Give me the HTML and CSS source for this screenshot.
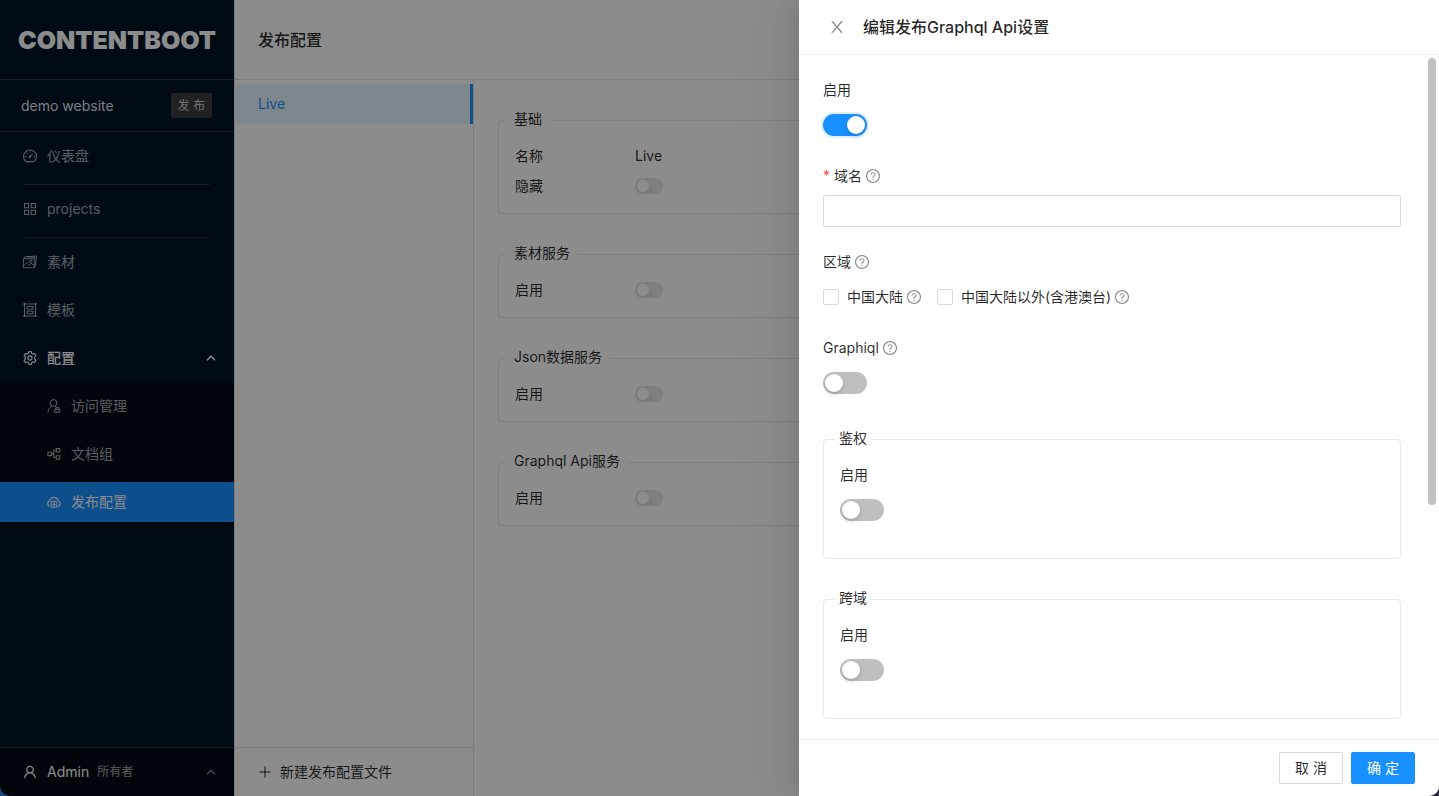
FILE: index.html
```html
<!DOCTYPE html>
<html lang="zh-CN">
<head>
<meta charset="utf-8">
<meta name="viewport" content="width=device-width, initial-scale=1">
<title>发布配置 - CONTENTBOOT</title>
<link rel="stylesheet" href="styles.css">
</head>
<body>
<svg class="sprite" aria-hidden="true">
  <symbol id="i-help" viewBox="64 64 896 896"><path fill="currentColor" d="M512 64C264.6 64 64 264.6 64 512s200.6 448 448 448 448-200.6 448-448S759.4 64 512 64zm0 820c-205.4 0-372-166.6-372-372s166.6-372 372-372 372 166.6 372 372-166.6 372-372 372z"/><path fill="currentColor" d="M623.6 316.7C593.6 290.4 554 276 512 276s-81.6 14.5-111.6 40.7C369.2 344 352 380.7 352 420v7.6c0 4.4 3.6 8 8 8h48c4.4 0 8-3.6 8-8V420c0-44.1 43.1-80 96-80s96 35.9 96 80c0 31.1-22 59.6-56.1 72.7-21.2 8.1-39.2 22.3-52.1 40.9-13.1 19-19.9 41.8-19.9 64.9V620c0 4.4 3.6 8 8 8h48c4.4 0 8-3.6 8-8v-22.7a48.3 48.3 0 0130.9-44.8c59-22.7 97.1-74.7 97.1-132.5.1-39.3-17.1-76-48.3-103.3zM472 732a40 40 0 1080 0 40 40 0 10-80 0z"/></symbol>
  <symbol id="i-up" viewBox="0 0 10 10"><path fill="none" stroke="currentColor" stroke-width="1.5" d="M1 7.2 5 3.2 9 7.2"/></symbol>
</svg>
<div class="app">
  <aside class="sider">
    <div class="brand">CONTENTBOOT</div>
    <div class="site">
      <span>demo website</span>
      <button class="publish" type="button">发 布</button>
    </div>
    <nav class="menu">
      <a class="item" href="#">
        <svg class="icon" viewBox="0 0 14 14" fill="none" stroke="currentColor" stroke-width="1.1"><path d="M3 12.6A6.5 6.5 0 1 1 11 12.6Z" stroke-linejoin="round"/><path d="M6.8 8 9.6 4.9M7 2.2v1.4M3.4 3.9l.9.9M1.9 7.6h1.4M10.7 7.6h1.4"/><circle cx="6.8" cy="8" r=".6"/></svg>
        仪表盘</a>
      <hr class="divider">
      <a class="item" href="#">
        <svg class="icon" viewBox="0 0 14 14" fill="none" stroke="currentColor" stroke-width="1.1"><path d="M1.5 1.5h4.2v4.2H1.5zM8.3 1.5h4.2v4.2H8.3zM1.5 8.3h4.2v4.2H1.5zM8.3 8.3h4.2v4.2H8.3z"/></svg>
        projects</a>
      <hr class="divider">
      <a class="item" href="#">
        <svg class="icon" viewBox="0 0 14 14" fill="none" stroke="currentColor" stroke-width=".9"><path d="M.5 3.8h10.9v9H.5zM1.2 3.6 1.5 2.2 3.6 1.8 13.5 1 12.5 10.6 11.5 12M3.5 1.8l8 .6v1.4M.8 10.4 3.4 7.8l2.8 2.6 2-2 3 2.2"/><circle cx="7.6" cy="6.5" r="1.3"/></svg>
        素材</a>
      <a class="item" href="#">
        <svg class="icon" viewBox="0 0 14 14" fill="none" stroke="currentColor"><path d="M1.5 0v14M12.5 0v14M0 1h14M0 13h14M4 3.5h6v2.6H4zM4 8.1h6v2.6H4z"/></svg>
        模板</a>
      <a class="item open" href="#">
        <svg class="icon" viewBox="0 0 14 14" fill="none" stroke="currentColor" stroke-width="1.1" stroke-linejoin="round"><path d="M5.8.6H8.2L8.6 2.2 9.8 2.9 11.4 2.4 12.9 4.6 11.7 5.9V8.1L12.9 9.4 11.4 11.6 9.8 11.1 8.6 11.8 8.2 13.4H5.8L5.4 11.8 4.2 11.1 2.6 11.6 1.1 9.4 2.3 8.1V5.9L1.1 4.6 2.6 2.4 4.2 2.9 5.4 2.2Z"/><circle cx="7" cy="7" r="2.1"/></svg>
        配置<svg class="caret"><use href="#i-up"/></svg></a>
      <div class="submenu">
        <a class="item" href="#">
          <svg class="icon" viewBox="0 0 14 14" fill="none" stroke="currentColor"><circle cx="6.6" cy="4" r="3.4"/><path d="M1 13.4C1.1 10.4 2.6 8.2 4.9 7.2M8.3 7.2l.9.6M7.7 10.2h5.1v3.2H7.7zM8.9 10V8.4h2.8V10M10.2 11.2v1.2"/></svg>
          访问管理</a>
        <a class="item" href="#">
          <svg class="icon" viewBox="0 0 14 14" fill="none" stroke="currentColor" stroke-width="1.1"><path d="M.9 5.2h3.4v3.4H.9zM9.3 1.6h3.4V5H9.3zM9.3 8.8h3.4v3.4H9.3zM4.4 6.9h2.2M9.2 3.3H6.8v7.2h2.4"/></svg>
          文档组</a>
        <a class="item selected" href="#" aria-current="page">
          <svg class="icon" viewBox="0 0 14 14" fill="none" stroke="currentColor" stroke-width="1.1"><path d="M3.2 11.4A3 3 0 0 1 2.5 5.7 4.8 4.8 0 0 1 11.5 5.7 3 3 0 0 1 10.8 11.4"/><path stroke-width=".9" d="M4.2 6.3h5.6v6H4.2zM4.2 9.3h5.6M7 6.3v6"/></svg>
          发布配置</a>
      </div>
    </nav>
    <button class="account" type="button">
      <svg class="icon" viewBox="64 64 896 896" fill="currentColor"><path d="M858.5 763.6a374 374 0 00-80.6-119.5 375.63 375.63 0 00-119.5-80.6c-.4-.2-.8-.3-1.2-.5C719.5 518 760 444.7 760 362c0-137-111-248-248-248S264 225 264 362c0 82.7 40.5 156 102.8 201.1-.4.2-.8.3-1.2.5-44.8 18.9-85 46-119.5 80.6a375.63 375.63 0 00-80.6 119.5A371.7 371.7 0 00136 901.8a8 8 0 008 8.2h60c4.4 0 7.9-3.5 8-7.8 2-77.2 33-149.5 87.8-204.3 56.7-56.7 132-87.9 212.2-87.9s155.5 31.2 212.2 87.9C779 752.7 810 825 812 902.2c.1 4.4 3.6 7.8 8 7.8h60a8 8 0 008-8.2c-1-47.8-10.9-94.3-29.5-138.2zM512 534c-45.9 0-89.1-17.9-121.6-50.4S340 407.9 340 362c0-45.9 17.9-89.1 50.4-121.6S466.1 190 512 190s89.1 17.9 121.6 50.4S684 316.1 684 362c0 45.9-17.9 89.1-50.4 121.6S557.9 534 512 534z"/></svg>
      <span>Admin</span><small class="role">所有者</small>
      <svg class="caret"><use href="#i-up"/></svg>
    </button>
  </aside>

  <main class="main">
    <header class="header"><h1 class="title">发布配置</h1></header>
    <div class="columns">
      <section class="profiles">
        <a class="profile" href="#">Live</a>
        <button class="add" type="button">
          <svg class="plus" viewBox="0 0 14 14" fill="none" stroke="currentColor"><path d="M7 1.5v11M1.5 7h11"/></svg>
          新建发布配置文件</button>
      </section>
      <section class="details">
        <fieldset class="group">
          <legend>基础</legend>
          <div class="row"><span class="key">名称</span><span>Live</span></div>
          <div class="row"><label class="key" for="hidden">隐藏</label><input class="switch small" id="hidden" type="checkbox" role="switch" disabled></div>
        </fieldset>
        <fieldset class="group">
          <legend>素材服务</legend>
          <div class="row"><label class="key" for="asset">启用</label><input class="switch small" id="asset" type="checkbox" role="switch" disabled></div>
        </fieldset>
        <fieldset class="group">
          <legend>Json数据服务</legend>
          <div class="row"><label class="key" for="json">启用</label><input class="switch small" id="json" type="checkbox" role="switch" disabled></div>
        </fieldset>
        <fieldset class="group">
          <legend>Graphql Api服务</legend>
          <div class="row"><label class="key" for="graphql">启用</label><input class="switch small" id="graphql" type="checkbox" role="switch" disabled></div>
        </fieldset>
      </section>
    </div>
  </main>

  <div class="mask"></div>
  <section class="drawer" role="dialog" aria-labelledby="drawer-title">
    <header class="drawer-header">
      <button class="close" type="button" aria-label="关闭">
        <svg class="close-icon" viewBox="64 64 896 896" fill="currentColor"><path d="M563.8 512l262.5-312.9c4.4-5.2.7-13.1-6.1-13.1h-79.8c-4.7 0-9.2 2.1-12.3 5.7L511.6 449.8 295.1 191.7c-3-3.6-7.5-5.7-12.3-5.7H203c-6.8 0-10.5 7.9-6.1 13.1L459.4 512 196.9 824.9A7.95 7.95 0 00203 838h79.8c4.7 0 9.2-2.1 12.3-5.7l216.5-258.1 216.5 258.1c3 3.6 7.5 5.7 12.3 5.7h79.8c6.8 0 10.5-7.9 6.1-13.1L563.8 512z"/></svg>
      </button>
      <h2 class="title" id="drawer-title">编辑发布Graphql Api设置</h2>
    </header>
    <div class="drawer-body">
      <form class="form" id="api-form">
        <div class="field">
          <label for="enabled">启用</label>
          <div class="control"><input class="switch focused" id="enabled" type="checkbox" role="switch" checked></div>
        </div>
        <div class="field">
          <label for="domain"><span class="required">*</span>域名<svg class="help"><use href="#i-help"/></svg></label>
          <div class="control"><input class="text" id="domain" type="text"></div>
        </div>
        <div class="field" role="group" aria-labelledby="region">
          <span class="caption" id="region">区域<svg class="help"><use href="#i-help"/></svg></span>
          <div class="control">
            <label class="choice"><input class="check" type="checkbox">中国大陆<svg class="help"><use href="#i-help"/></svg></label>
            <label class="choice"><input class="check" type="checkbox">中国大陆以外(含港澳台)<svg class="help"><use href="#i-help"/></svg></label>
          </div>
        </div>
        <div class="field">
          <label for="graphiql">Graphiql<svg class="help"><use href="#i-help"/></svg></label>
          <div class="control"><input class="switch" id="graphiql" type="checkbox" role="switch"></div>
        </div>
        <fieldset class="group">
          <legend>鉴权</legend>
          <div class="field">
            <label for="auth">启用</label>
            <div class="control"><input class="switch" id="auth" type="checkbox" role="switch"></div>
          </div>
        </fieldset>
        <fieldset class="group">
          <legend>跨域</legend>
          <div class="field">
            <label for="cors">启用</label>
            <div class="control"><input class="switch" id="cors" type="checkbox" role="switch"></div>
          </div>
        </fieldset>
      </form>
      <div class="rail"><div class="thumb"></div></div>
    </div>
    <footer class="drawer-footer">
      <button class="btn" type="button">取 消</button>
      <button class="btn primary" type="submit" form="api-form">确 定</button>
    </footer>
  </section>
</div>
</body>
</html>
```

FILE: styles.css
```css
* { box-sizing: border-box; }

body {
  margin: 0;
  font: 14px/22px Inter, "Noto Sans CJK SC", sans-serif;
  color: rgba(0, 0, 0, .85);
  background: linear-gradient(90deg, #174a80 50%, #2d2840 50%);
}

button, input { font: inherit; color: inherit; margin: 0; }
button { border: 0; background: none; padding: 0; }
a { color: inherit; text-decoration: none; }
h1, h2 { margin: 0; }
svg { display: block; flex: none; }
.sprite { position: absolute; width: 0; height: 0; }

.app {
  position: relative;
  display: flex;
  height: 100vh;
  overflow: hidden;
  border-radius: 0 0 10px 10px;
  background: #fff;
}

/* Sidebar */
.sider {
  flex: none;
  width: 234px;
  display: flex;
  flex-direction: column;
  background: #001529;
  color: #fff;
}
.brand {
  height: 80px;
  padding: 0 18px;
  display: flex;
  align-items: center;
  border-bottom: 1px solid #303030;
  font-size: 25px;
  font-weight: 900;
}
.site {
  height: 52px;
  padding: 0 22px 0 21px;
  display: flex;
  align-items: center;
  justify-content: space-between;
  border-bottom: 1px solid #303030;
  color: rgba(255, 255, 255, .9);
}
.publish {
  height: 25px;
  padding: 0 7px;
  border-radius: 2px;
  background: #3c3c40;
  font-size: 12px;
  color: rgba(255, 255, 255, .75);
}
.menu { flex: 1; }
.item {
  display: flex;
  align-items: center;
  gap: 10px;
  height: 40px;
  margin: 4px 0;
  padding: 0 18px 0 23px;
  color: rgba(255, 255, 255, .65);
}
.menu, .submenu { display: flex; flex-direction: column; }
.icon { width: 14px; height: 14px; }
.item.open { color: #fff; font-weight: 500; }
.caret { width: 10px; height: 10px; margin-left: auto; }
.divider {
  width: auto;
  height: 1px;
  margin: 4px 24px 0;
  border: 0;
  background: #303030;
  align-self: stretch;
}
.submenu { background: #000c17; }
.submenu .item { padding-left: 47px; }
.item.selected { background: #1890ff; color: #fff; }
.account {
  display: flex;
  align-items: center;
  gap: 10px;
  height: 49px;
  padding: 0 18px 0 23px;
  border-top: 1px solid #303030;
  background: #000c17;
}
.account .caret { opacity: .5; }
.role {
  margin-left: -2px;
  font-size: 12px;
  color: rgba(255, 255, 255, .65);
}

/* Main area */
.main {
  flex: 1;
  min-width: 0;
  display: flex;
  flex-direction: column;
  border-left: 1px solid #e0e0e0;
}
.header {
  height: 80px;
  padding: 0 23px;
  display: flex;
  align-items: center;
  border-bottom: 1px solid #e4e4e4;
}
.title { font-size: 16px; font-weight: 500; }
.columns { flex: 1; display: flex; }
.profiles {
  width: 239px;
  padding-top: 4px;
  display: flex;
  flex-direction: column;
  border-right: 1px solid #e4e4e4;
}
.profile {
  height: 40px;
  padding: 9px 23px;
  border-right: 3px solid #1890ff;
  background: #e6f7ff;
  color: #1890ff;
}
.add {
  height: 49px;
  margin-top: auto;
  padding: 0 23px;
  display: flex;
  align-items: center;
  gap: 8px;
  border-top: 1px solid #e4e4e4;
}
.plus { width: 14px; height: 14px; }
.details { flex: 1; padding: 29px 24px; }

.group {
  min-width: 0;
  margin: 0 0 29px;
  padding: 14px 16px 8px;
  border: 1px solid #e8e8e8;
  border-radius: 4px;
}
.group legend { margin-left: -9px; padding: 0 8px 2px; line-height: 20px; }
.row { display: flex; align-items: center; padding-bottom: 8px; }
.key { width: 120px; }

/* Controls */
.switch {
  appearance: none;
  flex: none;
  width: 44px;
  height: 22px;
  padding: 2px;
  display: flex;
  border-radius: 11px;
  background: rgba(0, 0, 0, .25);
}
.switch::before {
  content: "";
  width: 18px;
  height: 18px;
  border-radius: 50%;
  background: #fff;
  box-shadow: 0 2px 4px rgba(0, 35, 11, .2);
}
.switch:checked { background: #1890ff; justify-content: flex-end; }
.switch.focused { box-shadow: 0 0 0 2px rgba(24, 144, 255, .15); }
.switch.small { width: 28px; height: 16px; opacity: .4; }
.switch.small::before { width: 12px; height: 12px; }
.check {
  appearance: none;
  width: 16px;
  height: 16px;
  margin-right: 8px;
  border: 1px solid #d9d9d9;
  border-radius: 2px;
  background: #fff;
}
.text {
  width: 100%;
  height: 32px;
  padding: 4px 11px;
  border: 1px solid #d9d9d9;
  border-radius: 2px;
  background: #fff;
}
.btn {
  height: 32px;
  padding: 0 15px;
  border: 1px solid #d9d9d9;
  border-radius: 2px;
  background: #fff;
  min-width: 64px;
}
.btn.primary { border-color: #1890ff; background: #1890ff; color: #fff; }

/* Drawer */
.mask { position: absolute; inset: 0; background: rgba(0, 0, 0, .45); }
.drawer {
  position: absolute;
  inset: 0 0 0 auto;
  width: 640px;
  max-width: 100%;
  display: flex;
  flex-direction: column;
  background: #fff;
  box-shadow: -6px 0 16px -8px rgba(0, 0, 0, .08), -9px 0 28px rgba(0, 0, 0, .05), -12px 0 48px 16px rgba(0, 0, 0, .03);
}
.drawer-header {
  height: 55px;
  padding: 0 30px;
  display: flex;
  align-items: center;
  gap: 18px;
  border-bottom: 1px solid #f0f0f0;
}
.close { color: rgba(0, 0, 0, .45); }
.close-icon { width: 16px; height: 16px; }
.drawer-body { flex: 1; min-height: 0; display: flex; }
.form { flex: 1; padding: 24px; overflow: hidden; }
.field { padding-bottom: 24px; }
.field > label, .caption { display: flex; align-items: center; }
.help { width: 14px; height: 14px; margin-left: 4px; color: rgba(0, 0, 0, .45); }
.required { width: 11px; color: #ff4d4f; }
.control { height: 32px; margin-top: 8px; display: flex; align-items: center; gap: 16px; }
.choice { display: flex; align-items: center; }
.form .group { margin-top: 5px; padding-bottom: 8px; }
.form .group + .group { margin-top: 0; }
.form .group legend { margin-left: -5px; padding: 0 4px 2px; }
.rail { width: 14px; padding: 3px; }
.thumb { width: 8px; height: 66%; border-radius: 4px; background: #c1c1c1; }
.drawer-footer {
  display: flex;
  justify-content: flex-end;
  gap: 8px;
  padding: 12px 24px;
  border-top: 1px solid #f0f0f0;
}
```
